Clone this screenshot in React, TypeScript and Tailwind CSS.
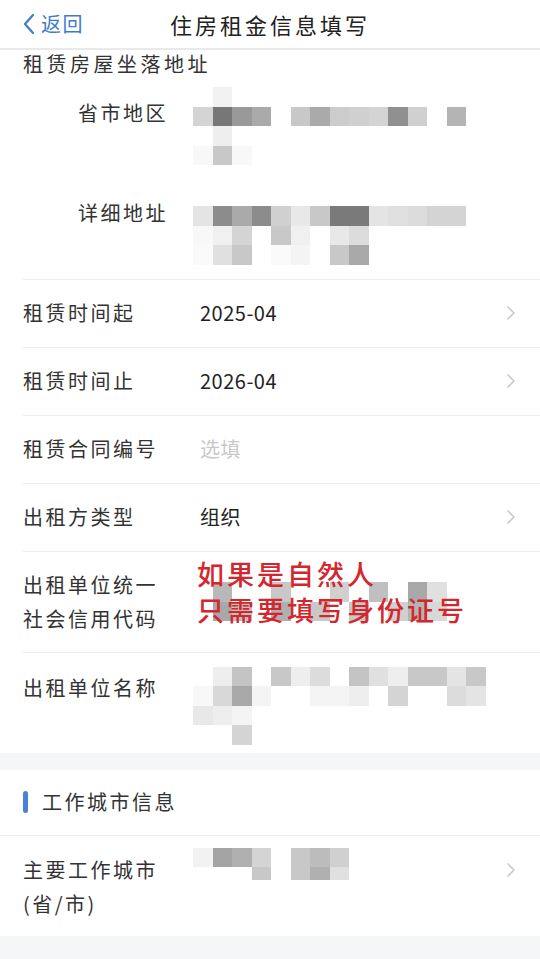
// 住房租金信息填写 - 个税专项附加扣除表单页

import React from 'react';

const FONT = 'font-["Noto_Sans_CJK_SC","Noto_Sans",sans-serif]';

// 打码区域: 每格 19.5px 的灰度马赛克
type Cell = string | null;

const addrRegion: Cell[][] = [
  [null, '#f2f2f2'],
  ['#d4d4d4', '#777777', '#999999', '#aaaaaa', null, '#c8c8c8', '#aaaaaa', '#cccccc', '#d0d0d0', '#d4d4d4', '#909090', '#d0d0d0', null, '#b4b4b4'],
  [null, '#eeeeee'],
  ['#f8f8f8', '#c8c8c8', '#f8f8f8'],
];

const addrDetail: Cell[][] = [
  ['#e4e4e4', '#8c8c8c', '#aaaaaa', '#8c8c8c', '#d0d0d0', '#e8e8e8', '#c8c8c8', '#7a7a7a', '#7a7a7a', '#e4e4e4', '#e0e0e0', '#dcdcdc', '#d4d4d4', '#d4d4d4'],
  ['#f8f8f8', '#f0f0f0', '#d4d4d4', null, '#c8c8c8', '#f0f0f0', null, '#e8e8e8', '#dcdcdc'],
  ['#fafafa', '#e0e0e0', '#c8c8c8', null, '#fafafa', '#f4f4f4', null, '#c8c8c8', '#a8a8a8'],
];

const creditCode: Cell[][] = [
  [null, '#b8b8b8', null, null, '#c8c8c8', null, null, '#d0d0d0', null, '#c0c0c0', null, '#a8a8a8', '#e0e0e0'],
  [null, '#a8a8a8', '#c0c0c0', null, '#b0b0b0', null, '#c8c8c8', null, '#c8c8c8', null, '#d0d0d0', '#b4b4b4', '#d8d8d8'],
];

const lessorName: Cell[][] = [
  [null, '#eeeeee', '#c4c4c4', null, '#c8c8c8', '#eeeeee', '#dcdcdc', null, '#c4c4c4', '#e0e0e0', '#eeeeee', '#c8c8c8', '#c8c8c8', '#e4e4e4', '#c8c8c8'],
  ['#f8f8f8', '#d8d8d8', '#a8a8a8', '#f4f4f4', null, null, '#f4f4f4', '#f4f4f4', '#eeeeee', null, '#d4d4d4', null, null, '#dcdcdc', '#e4e4e4'],
  ['#e8e8e8', '#eeeeee', '#f4f4f4'],
  [null, null, '#d4d4d4'],
];

const workCity: Cell[][] = [
  ['#f2f2f2', '#a4a4a4', '#b0b0b0', '#d4d4d4', null, '#c8c8c8', '#bcbcbc', '#d0d0d0'],
  [null, null, null, '#c8c8c8', null, '#c8c8c8', '#b0b0b0', '#e0e0e0'],
];

const Mosaic: React.FC<{ cells: Cell[][] }> = ({ cells }) => (
  <div className="flex flex-col">
    {cells.map((row, i) => (
      <div key={i} className="flex h-[19.5px]">
        {row.map((c, j) => (
          <div key={j} className="w-[19.5px] h-full" style={{ backgroundColor: c ?? 'transparent' }} />
        ))}
      </div>
    ))}
  </div>
);

const Chevron = () => (
  <svg width="10" height="16" viewBox="0 0 10 16" className="shrink-0">
    <polyline points="2,2 8,8 2,14" fill="none" stroke="#c9c9c9" strokeWidth="1.6" strokeLinecap="round" strokeLinejoin="round" />
  </svg>
);

const Row: React.FC<{ label: string; children?: React.ReactNode; arrow?: boolean }> = ({ label, children, arrow }) => (
  <div className="ml-[23px] border-t border-[#ececec] h-[68px] flex items-center pr-[24px]">
    <div className="w-[177px] shrink-0 text-[20px] tracking-[2.5px] text-[#333]">{label}</div>
    <div className="flex-1 text-[20px] text-[#222] tracking-[0.5px]">{children}</div>
    {arrow && <Chevron />}
  </div>
);

export default function App() {
  return (
    <div className={`w-[540px] h-[959px] bg-[#f5f6f8] overflow-hidden ${FONT}`}>
      {/* 顶部导航 */}
      <div className="h-[50px] bg-white border-b-2 border-[#e9e9e9] flex items-center relative">
        <div className="flex items-center pl-[22px] text-[#3f7cc8]">
          <svg width="14" height="22" viewBox="0 0 14 22">
            <polyline points="11,2 3,11 11,20" fill="none" stroke="#3f7cc8" strokeWidth="2.2" strokeLinecap="round" strokeLinejoin="round" />
          </svg>
          <span className="ml-[5px] text-[20px] tracking-[1.5px]">返回</span>
        </div>
        <div className="absolute left-0 right-0 text-center text-[22px] tracking-[3px] text-[#222] pointer-events-none">
          住房租金信息填写
        </div>
      </div>

      <div className="bg-white">
        {/* 租赁房屋坐落地址 */}
        <div className="pl-[23px] h-[28px] flex items-center text-[20px] tracking-[3.5px] text-[#333]">租赁房屋坐落地址</div>
        <div className="flex pl-[78px] pt-[9px]">
          <div className="w-[115px] pt-[16px] text-[20px] tracking-[2.5px] text-[#333] leading-[20px]">省市地区</div>
          <Mosaic cells={addrRegion} />
        </div>
        <div className="flex pl-[78px] pt-[41px] pb-[14px]">
          <div className="w-[115px] text-[20px] tracking-[2.5px] text-[#333] leading-[14px]">详细地址</div>
          <Mosaic cells={addrDetail} />
        </div>

        <Row label="租赁时间起" arrow>2025-04</Row>
        <Row label="租赁时间止" arrow>2026-04</Row>
        <Row label="租赁合同编号">
          <span className="text-[#c8c8c8]">选填</span>
        </Row>
        <Row label="出租方类型" arrow>组织</Row>

        {/* 统一社会信用代码 + 标注 */}
        <div className="ml-[23px] border-t border-[#ececec] h-[101px] flex items-center relative">
          <div className="w-[170px] shrink-0 text-[20px] tracking-[2.5px] text-[#333] leading-[34px]">
            出租单位统一
            <br />
            社会信用代码
          </div>
          <Mosaic cells={creditCode} />
          <div className="absolute left-[174px] top-[4px] text-[27px] leading-[36px] tracking-[3px] text-[#d3262d] font-medium">
            如果是自然人
            <br />
            只需要填写身份证号
          </div>
        </div>

        <div className="ml-[23px] border-t border-[#ececec] h-[101px] flex items-start">
          <div className="w-[170px] shrink-0 pt-[20px] text-[20px] tracking-[2.5px] text-[#333]">出租单位名称</div>
          <div className="pt-[14px]">
            <Mosaic cells={lessorName} />
          </div>
        </div>
      </div>

      {/* 工作城市信息 */}
      <div className="mt-[17px] bg-white">
        <div className="h-[66px] flex items-center pl-[23px] border-b border-[#ececec]">
          <div className="w-[5px] h-[22px] rounded-full bg-[#4a80d8]" />
          <span className="ml-[14px] text-[20px] tracking-[2.5px] text-[#333]">工作城市信息</span>
        </div>
        <div className="h-[100px] pl-[23px] pr-[24px] flex items-start">
          <div className="w-[170px] shrink-0 pt-[17px] text-[20px] tracking-[2.5px] text-[#333] leading-[34px]">
            主要工作城市
            <br />
            (省/市)
          </div>
          <div className="flex-1 pt-[12px] h-[44px] overflow-hidden">
            <Mosaic cells={workCity} />
          </div>
          <div className="pt-[26px]">
            <Chevron />
          </div>
        </div>
      </div>
    </div>
  );
}
